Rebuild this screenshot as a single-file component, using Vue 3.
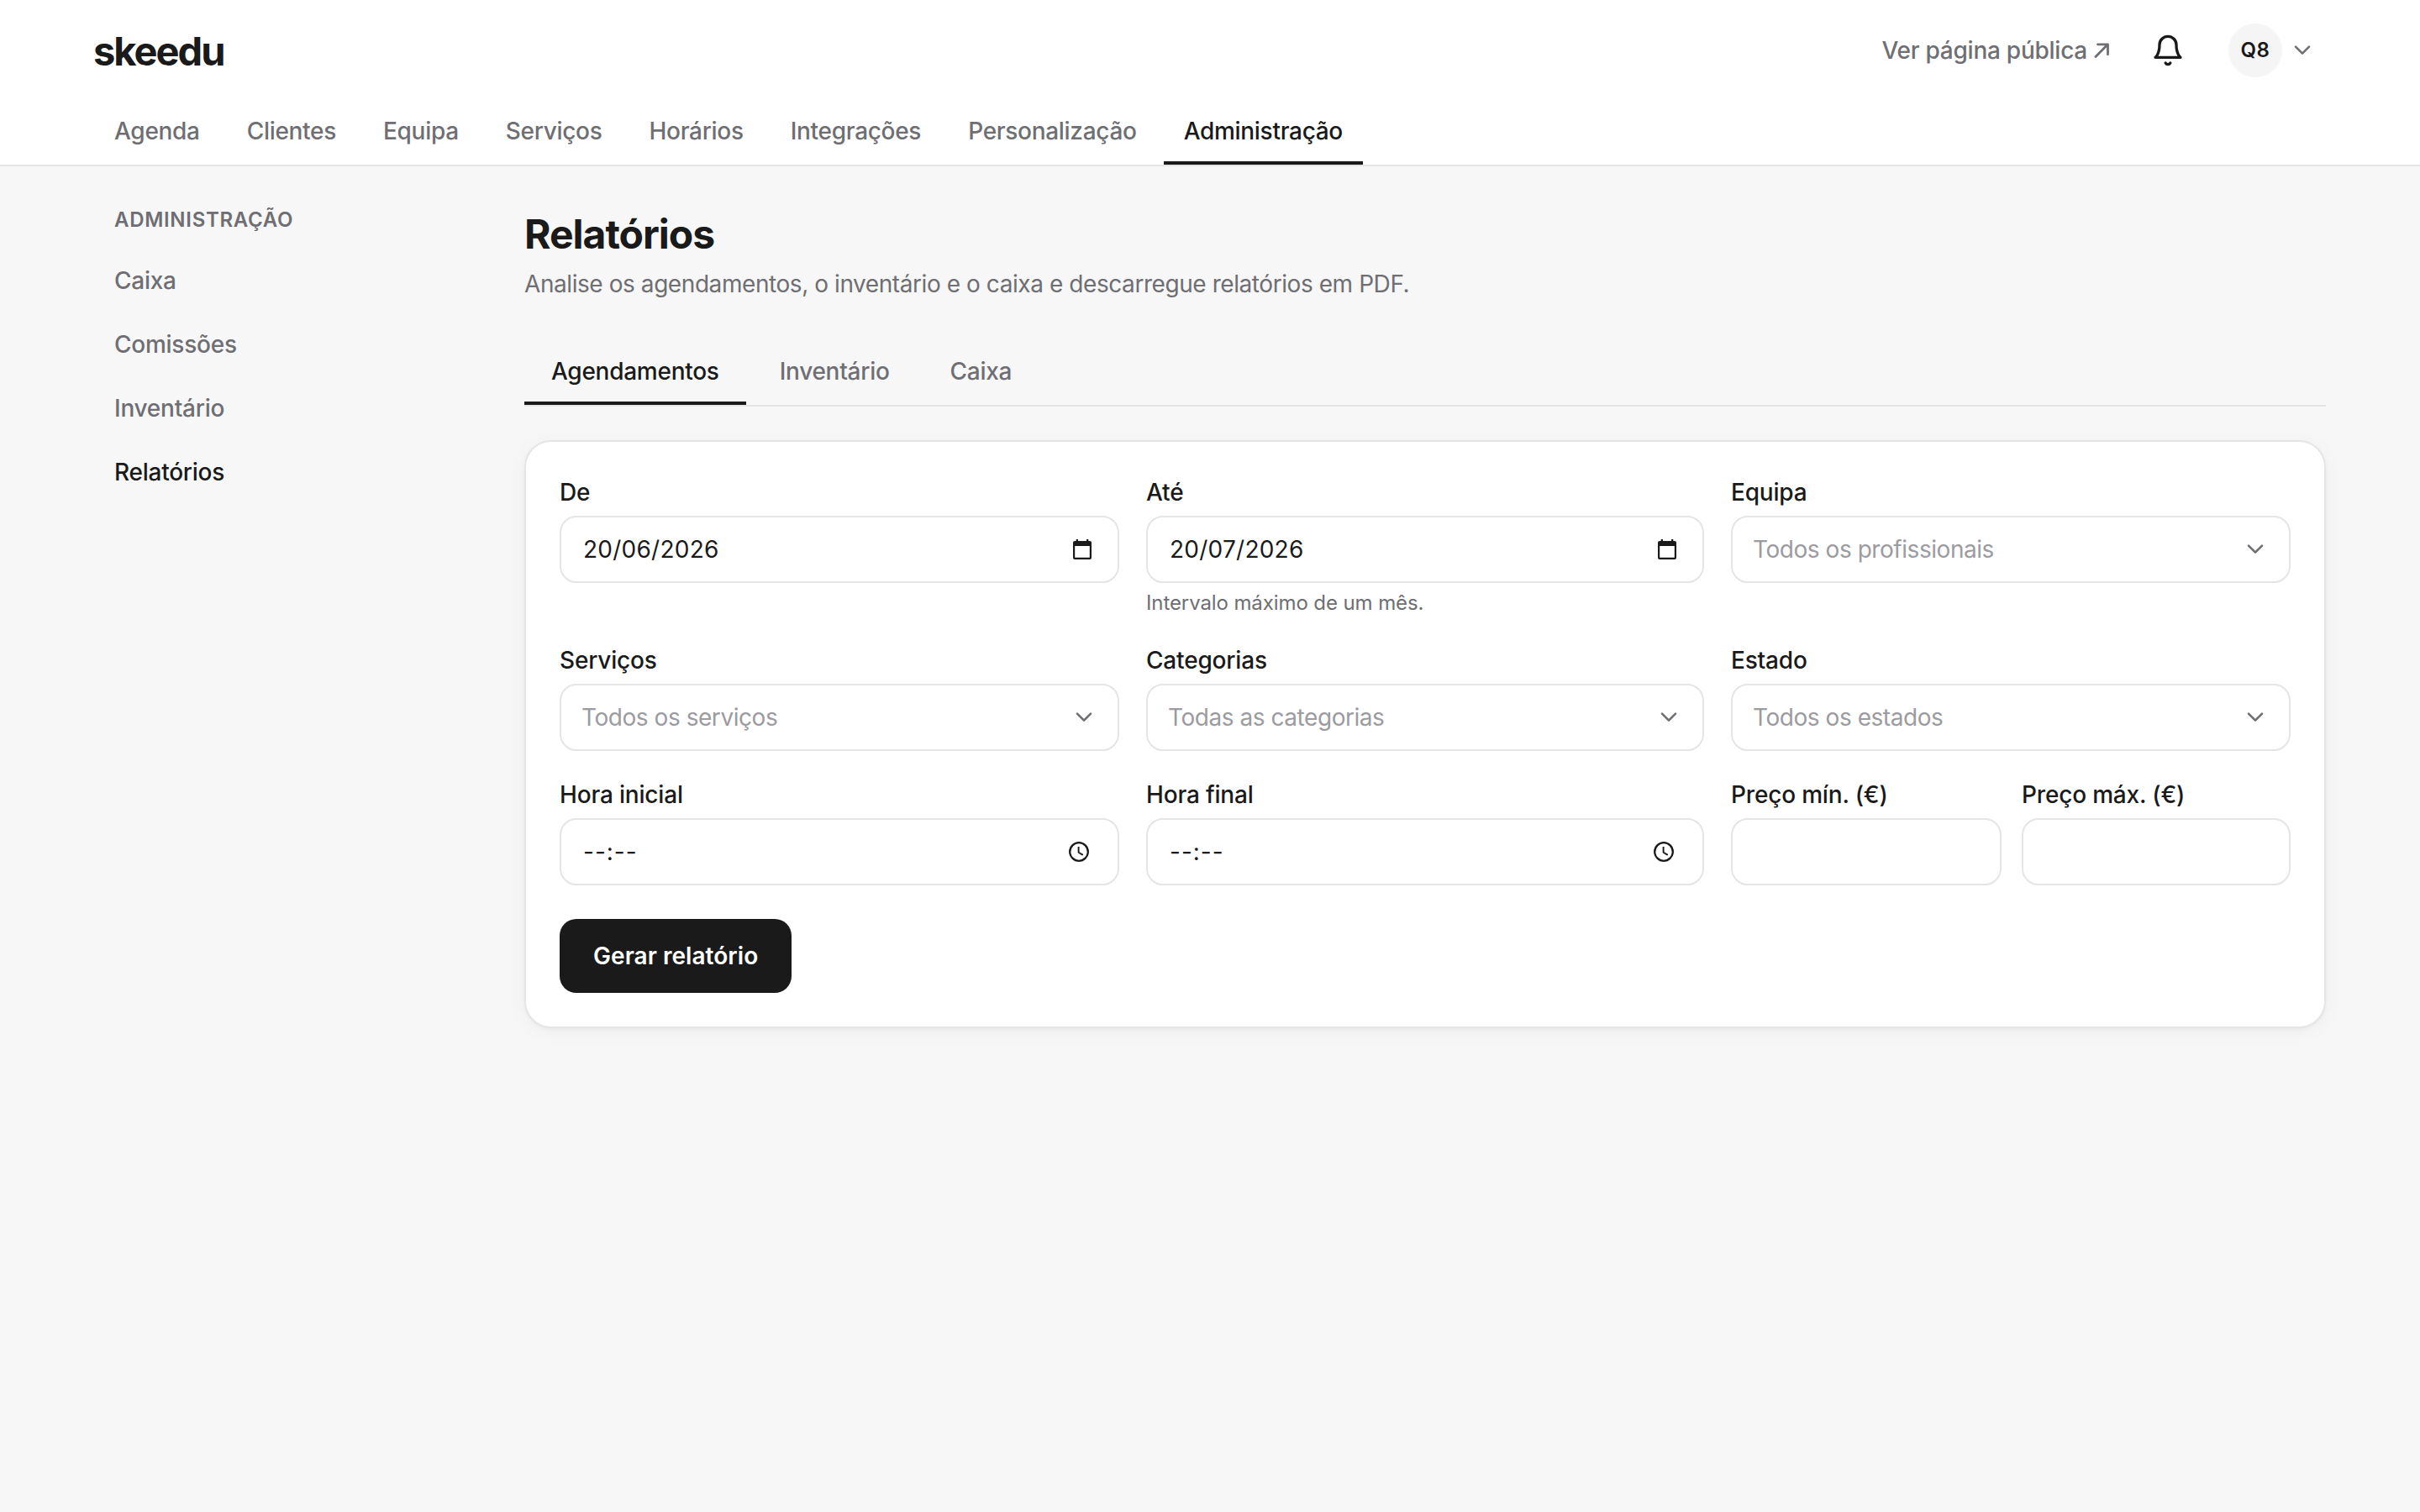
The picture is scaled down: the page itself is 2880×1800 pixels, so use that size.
<script setup>
import {ref} from 'vue'

const nav = ['Agenda', 'Clientes', 'Equipa', 'Serviços', 'Horários', 'Integrações', 'Personalização', 'Administração']
const sidebar = ['Caixa', 'Comissões', 'Inventário', 'Relatórios']
const tabs = ['Agendamentos', 'Inventário', 'Caixa']

const activeNav = ref('Administração')
const activeItem = ref('Relatórios')
const activeTab = ref('Agendamentos')

const fields = [
  {label: 'De', type: 'date', value: '20/06/2026'},
  {label: 'Até', type: 'date', value: '20/07/2026', hint: 'Intervalo máximo de um mês.'},
  {label: 'Equipa', type: 'select', value: 'Todos os profissionais'},
  {label: 'Serviços', type: 'select', value: 'Todos os serviços'},
  {label: 'Categorias', type: 'select', value: 'Todas as categorias'},
  {label: 'Estado', type: 'select', value: 'Todos os estados'},
  {label: 'Hora inicial', type: 'time', value: '--:--'},
  {label: 'Hora final', type: 'time', value: '--:--'},
]
const prices = ['Preço mín. (€)', 'Preço máx. (€)']
</script>

<template>
  <div class="page">
    <header class="header">
      <div class="header__top">
        <a class="logo">skeedu</a>
        <div class="header__actions">
          <a class="public-link">
            <span>Ver página pública</span>
            <svg class="public-link__icon" viewBox="0 0 18 18">
              <path d="M2 16.5 16.2 2M4.5 1.8h12v12"/>
            </svg>
          </a>
          <svg class="bell" viewBox="0 0 24 24">
            <path d="M6 8a6 6 0 0 1 12 0c0 7 3 9 3 9H3s3-2 3-9"/>
            <path d="M10.3 21a1.94 1.94 0 0 0 3.4 0"/>
          </svg>
          <div class="avatar">Q8</div>
          <svg class="chevron" viewBox="0 0 24 24">
            <path d="m4 7.7 8 8 8-8"/>
          </svg>
        </div>
      </div>
      <nav class="nav">
        <a v-for="item in nav" :key="item" :class="{'nav__item--active' : item === activeNav}" class="nav__item"
           @click="activeNav = item">{{ item }}</a>
      </nav>
    </header>

    <div class="body">
      <aside class="sidebar">
        <p class="sidebar__title">Administração</p>
        <a v-for="item in sidebar" :key="item" :class="{'sidebar__item--active' : item === activeItem}"
           class="sidebar__item" @click="activeItem = item">{{ item }}</a>
      </aside>

      <main class="main">
        <h1>Relatórios</h1>
        <p class="subtitle">Analise os agendamentos, o inventário e o caixa e descarregue relatórios em PDF.</p>
        <div class="tabs">
          <a v-for="tab in tabs" :key="tab" :class="{'tabs__item--active' : tab === activeTab}" class="tabs__item"
             @click="activeTab = tab">{{ tab }}</a>
        </div>

        <section class="card">
          <div class="form">
            <div v-for="field in fields" :key="field.label" class="field">
              <label>{{ field.label }}</label>
              <div :class="'control--' + field.type" class="control">
                <span>{{ field.value }}</span>
                <svg v-if="field.type === 'date'" class="icon-date" viewBox="0 0 22 24">
                  <path d="M20 2h-1.7V0H16v2H6V0H3.7v2H2a2 2 0 0 0-2 2v18a2 2 0 0 0 2 2h18a2 2 0 0 0 2-2V4a2 2 0 0 0-2-2zm-.2 19.8H2.2V8h17.6z"/>
                </svg>
                <svg v-else-if="field.type === 'time'" class="icon-time" viewBox="0 0 24 24">
                  <circle cx="12" cy="12" r="10.8"/>
                  <path d="M11.6 6v6.8l5.2 3.1"/>
                </svg>
                <svg v-else class="chevron" viewBox="0 0 24 24">
                  <path d="m4 7.7 8 8 8-8"/>
                </svg>
              </div>
              <p v-if="field.hint" class="hint">{{ field.hint }}</p>
            </div>
            <div class="prices">
              <div v-for="price in prices" :key="price" class="field">
                <label>{{ price }}</label>
                <div class="control"></div>
              </div>
            </div>
          </div>
          <button class="submit">Gerar relatório</button>
        </section>
      </main>
    </div>
  </div>
</template>

<style>
body {
  background: #f7f7f7;
}
</style>

<style scoped>
.page {
  min-height: 1800px;
  background: #f7f7f7;
  color: #1a1a1a;
  font-family: Inter, "Liberation Sans", sans-serif;
  font-size: 28px;
  line-height: 40px;
  letter-spacing: -0.25px;
}

h1, p {
  margin: 0;
}

svg {
  fill: none;
  stroke: currentColor;
  stroke-linecap: round;
  stroke-linejoin: round;
  flex-shrink: 0;
}

/* header */
.header {
  background: white;
  border-bottom: 2px solid #e5e5e7;
  padding: 0 112px;
}

.header__top {
  display: flex;
  align-items: center;
  justify-content: space-between;
  height: 120px;
}

.logo {
  font-size: 47px;
  font-weight: 700;
  letter-spacing: -2px;
  margin: 2px 0 0 -1px;
}

.header__actions {
  display: flex;
  align-items: center;
  padding-right: 16px;
}

.public-link {
  display: flex;
  align-items: center;
  gap: 8px;
  color: #6e6e73;
  font-weight: 500;
  margin-right: 50px;
}

.public-link__icon {
  width: 18px;
  height: 18px;
  stroke-width: 2.8;
}

.bell {
  width: 40px;
  height: 40px;
  stroke-width: 2;
  margin-right: 52px;
}

.avatar {
  width: 64px;
  height: 64px;
  line-height: 64px;
  border-radius: 50%;
  background: #f5f5f5;
  text-align: center;
  font-size: 24px;
  font-weight: 600;
  letter-spacing: 0.5px;
  margin-right: 12px;
}

.chevron {
  width: 24px;
  height: 24px;
  color: #6e6e73;
  stroke-width: 2.6;
}

.nav {
  display: flex;
  gap: 8px;
}

.nav__item {
  height: 72px;
  line-height: 72px;
  padding: 0 24px;
  border-bottom: 4px solid transparent;
  color: #6e6e73;
  font-weight: 500;
  letter-spacing: -0.3px;
  cursor: pointer;
}

.nav__item--active {
  color: #1a1a1a;
  border-color: #1a1a1a;
}

/* layout */
.body {
  display: flex;
  padding: 40px 112px 0;
}

.sidebar {
  width: 512px;
  flex-shrink: 0;
  padding: 4px 24px 0;
  box-sizing: border-box;
}

.sidebar__title {
  color: #6e6e73;
  font-size: 24px;
  font-weight: 600;
  letter-spacing: 0.7px;
  text-transform: uppercase;
  margin-bottom: 14px;
}

.sidebar__item {
  display: block;
  height: 76px;
  line-height: 76px;
  color: #6e6e73;
  font-weight: 500;
  cursor: pointer;
}

.sidebar__item--active {
  color: #1a1a1a;
}

.main {
  flex: 1;
}

h1 {
  font-size: 48px;
  font-weight: 700;
  line-height: 56px;
  letter-spacing: -1px;
  margin-top: 13px;
}

.subtitle {
  color: #6e6e73;
  letter-spacing: -0.43px;
  margin-top: 11px;
}

.tabs {
  display: flex;
  gap: 8px;
  border-bottom: 2px solid #e5e5e7;
  margin: 48px 0 40px;
}

.tabs__item {
  height: 72px;
  line-height: 72px;
  padding: 0 32px;
  border-bottom: 4px solid transparent;
  color: #6e6e73;
  font-weight: 500;
  letter-spacing: -0.27px;
  cursor: pointer;
}

.tabs__item--active {
  color: #1a1a1a;
  border-color: #1a1a1a;
}

/* card */
.card {
  background: white;
  border: 2px solid #e5e5e7;
  border-radius: 32px;
  padding: 40px;
  box-shadow: 0 2px 4px rgba(0, 0, 0, 0.04), 0 4px 24px rgba(0, 0, 0, 0.04);
}

.form {
  display: grid;
  grid-template-columns: 666px 1fr 666px;
  gap: 32px;
}

.field label {
  display: block;
  font-weight: 500;
  letter-spacing: -0.18px;
  margin-bottom: 8px;
}

.control {
  display: flex;
  align-items: center;
  justify-content: space-between;
  height: 80px;
  box-sizing: border-box;
  padding: 0 28px 0 24px;
  border: 2px solid #e5e5e7;
  border-radius: 20px;
  background: white;
}

.control--date {
  padding: 0 31px 0 26px;
  letter-spacing: 0.25px;
}

.control--time {
  padding: 0 34px 0 26px;
  letter-spacing: 1px;
}

.control--select span {
  color: #9b9ba0;
  letter-spacing: -0.45px;
}

.icon-date {
  width: 22px;
  height: 24px;
  fill: currentColor;
  stroke: none;
}

.icon-time {
  width: 24px;
  height: 24px;
  stroke-width: 2.3;
  stroke-linecap: butt;
}

.icon-time path {
  stroke-width: 1.9;
}

.hint {
  color: #6e6e73;
  font-size: 24px;
  line-height: 32px;
  letter-spacing: -0.1px;
  margin-top: 8px;
}

.prices {
  display: grid;
  grid-template-columns: 322px 320px;
  gap: 24px;
}

.submit {
  display: block;
  height: 88px;
  padding: 0 40px;
  margin-top: 40px;
  border: none;
  border-radius: 20px;
  background: #1a1a1a;
  color: white;
  font: inherit;
  font-weight: 600;
  letter-spacing: 0.05px;
  cursor: pointer;
}
</style>
